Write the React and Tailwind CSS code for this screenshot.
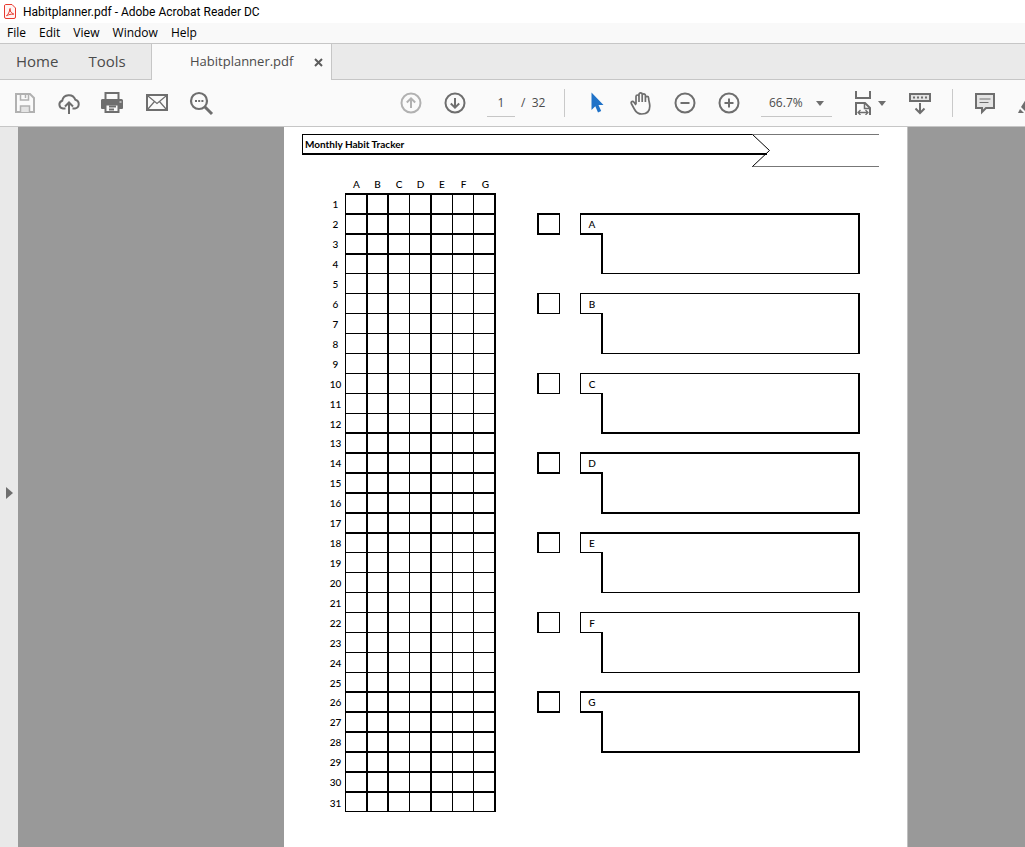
import React from "react";

const columns = [
  { name: "A", width: 21, line: 1 },
  { name: "B", width: 21, line: 2 },
  { name: "C", width: 22, line: 2 },
  { name: "D", width: 21, line: 1 },
  { name: "E", width: 22, line: 2 },
  { name: "F", width: 21, line: 1 },
  { name: "G", width: 23, line: 1 },
];

const days = Array.from({ length: 31 }, (_, i) => i + 1);
const thinDay = (d) => (d >= 5 && d <= 12) || (d >= 19 && d <= 25);
const rowHeight = (d) => {
  if (d === 12 || d === 25) return "h-[19px]";
  return d === 31 ? "h-[21px]" : "h-[20px]";
};

const habits = [
  { name: "A", slot: "h-[80px]", top: "border-t-2", tab: "h-[22px] border-b-2", box: "h-[61px]", bottom: "border-b" },
  { name: "B", slot: "h-[80px]", top: "border-t", tab: "h-[21px] border-b", box: "h-[61px]", bottom: "border-b" },
  { name: "C", slot: "h-[79px]", top: "border-t", tab: "h-[21px] border-b", box: "h-[61px]", bottom: "border-b-2" },
  { name: "D", slot: "h-[80px]", top: "border-t-2", tab: "h-[22px] border-b-2", box: "h-[62px]", bottom: "border-b-2" },
  { name: "E", slot: "h-[80px]", top: "border-t-2", tab: "h-[21px] border-b", box: "h-[61px]", bottom: "border-b" },
  { name: "F", slot: "h-[79px]", top: "border-t", tab: "h-[21px] border-b", box: "h-[61px]", bottom: "border-b" },
  { name: "G", slot: "h-[80px]", top: "border-t-2", tab: "h-[22px] border-b-2", box: "h-[62px]", bottom: "border-b-2" },
];

function ToolButton({ label, children, className = "text-[#6e6e6e]" }) {
  return (
    <button type="button" aria-label={label} className={`shrink-0 ${className}`}>
      <svg width="22" height="24" viewBox="0 0 22 24" fill="none" stroke="currentColor" strokeWidth="2" className="block overflow-visible">
        {children}
      </svg>
    </button>
  );
}

function Caret() {
  return (
    <svg width="8" height="5" viewBox="0 0 8 5" className="block" fill="#6e6e6e">
      <path d="M0 0h8L4 5z" />
    </svg>
  );
}

function Separator() {
  return <div className="h-[28px] w-px shrink-0 bg-[#c9c9c9]" />;
}

function TitleBar() {
  return (
    <header className="flex h-[23px] items-center gap-[7px] bg-white pl-[4px] font-['Roboto',sans-serif] text-[12px] text-black">
      <svg width="12" height="15" viewBox="0 0 12 15" fill="none" stroke="#e8392f">
        <path d="M1.500.5h6.500l3.500 3.500v9a1.500 1.500 0 0 1-1.500 1.500h-8a1.500 1.500 0 0 1-1.500-1.500v-11a1.500 1.500 0 0 1 1-1.500z" fill="#fff5f4" />
        <path d="M2.500 11.500c1.500-.5 3.200-4 3.300-6.500.1-1 .8-.6.500.5-.5 2 1.500 4 3 4.200.9.100.6.800-.4.600-2-.3-4 .2-5.400 1.200-.5.300-1.300.4-1 0z" />
      </svg>
      <span>Habitplanner.pdf - Adobe Acrobat Reader DC</span>
    </header>
  );
}

function MenuBar() {
  return (
    <nav className="flex h-[20px] items-center gap-[13px] bg-[#f9f9f9] pl-[7px] text-[12px] text-black">
      {["File", "Edit", "View", "Window", "Help"].map((m) => (
        <button key={m} type="button">{m}</button>
      ))}
    </nav>
  );
}

function TabBar() {
  return (
    <div className="flex h-[37px] border-t border-[#c6c6c6] bg-[#eaeaea] text-[#4b4b4b]">
      <div className="flex w-[152px] shrink-0 items-center gap-[30px] border-r border-b border-[#c6c6c6] pl-[16px] text-[15px]">
        <button type="button">Home</button>
        <button type="button">Tools</button>
      </div>
      <div className="flex w-[179px] shrink-0 items-center justify-between bg-[#fafafa] pr-[8px] pl-[38px]">
        <button type="button" className="text-[13px]">Habitplanner.pdf</button>
        <button type="button" aria-label="Close tab">
          <svg width="9" height="9" viewBox="0 0 9 9" className="block" stroke="#5c5c5c" strokeWidth="2">
            <path d="M1 1l7 7M8 1l-7 7" />
          </svg>
        </button>
      </div>
      <div className="flex-1 border-b border-l border-[#c6c6c6]" />
    </div>
  );
}

function Toolbar() {
  return (
    <div className="flex h-[47px] items-center overflow-hidden border-b border-[#c6c6c6] bg-[#fafafa] pl-[14px]">
      <div className="flex gap-[22px]">
        <ToolButton label="Save" className="text-[#b1b1b1]">
          <path d="M2 3h14l4 4v14H2z" />
          <path d="M6.500 3v6h8V3" strokeWidth="1.500" />
          <path d="M11.500 4v3" strokeWidth="1.500" />
          <path d="M6.500 21v-6h9v6" fill="#e4e4e4" strokeWidth="1.500" />
        </ToolButton>
        <ToolButton label="Upload to cloud">
          <path d="M7.500 17.500H5A4 4 0 0 1 4.200 9.700 6.800 6.800 0 0 1 17.300 8.700 4.500 4.500 0 0 1 17 17.500h-2.500" />
          <path d="M11 23V11.500M7 15.500l4-4 4 4" />
        </ToolButton>
        <ToolButton label="Print">
          <path d="M3.500 9V2h13v7" />
          <path d="M1 8h18.500a1.500 1.500 0 0 1 1.500 1.500V17a1 1 0 0 1-1 1H0a1 1 0 0 1-1-1V9.500A1.500 1.500 0 0 1 1 8z" fill="currentColor" stroke="none" />
          <path d="M3.500 13.500h13V21h-13z" fill="#fafafa" />
          <path d="M7 15.500h7M7 18.500h5" />
          <path d="M17.500 11h2" stroke="#fafafa" strokeWidth="1" />
        </ToolButton>
        <ToolButton label="Send by email">
          <path d="M1 4h20v15H1z" />
          <path d="M2 5l9 7.500L20 5M2 18l6.500-7.500M20 18l-6.500-7.500" strokeWidth="1.200" />
        </ToolButton>
        <ToolButton label="Find text">
          <circle cx="9" cy="10" r="8" strokeWidth="2.200" />
          <path d="M14.500 15.500l7.500 7.500" strokeWidth="3" />
          <path d="M5 10h2M8.200 10h2M11.400 10h2" />
        </ToolButton>
      </div>

      <div className="ml-[188px] flex shrink-0 items-center gap-[22px]">
        <ToolButton label="Previous page" className="text-[#b1b1b1]">
          <circle cx="11" cy="12" r="9.500" />
          <path d="M11 17V7.500M6.800 11.500L11 7.300l4.200 4.200" />
        </ToolButton>
        <ToolButton label="Next page">
          <circle cx="11" cy="12" r="9.500" />
          <path d="M11 7v9.500M6.800 12.500l4.200 4.200 4.200-4.200" />
        </ToolButton>
      </div>
      <input aria-label="Page number" defaultValue="1" className="ml-[21px] h-[28px] w-[28px] shrink-0 border-b border-[#c6c6c6] bg-transparent text-center text-[12px] text-[#4b4b4b] outline-none" />
      <span className="ml-[6px] w-[43px] shrink-0 text-[12px] whitespace-pre text-[#4b4b4b]">/  32</span>
      <Separator />

      <div className="ml-[21px] flex shrink-0 gap-[22px]">
        <ToolButton label="Select" className="text-[#1f72c8]">
          <path d="M5.500 1.500v17.500l3.800-3.700 2.700 6.200 3.200-1.500-2.700-6h5z" fill="currentColor" stroke="none" />
        </ToolButton>
        <ToolButton label="Pan">
          <path d="M6 13V5.500a1.500 1.500 0 0 1 3 0V11M9 5.500v-2a1.600 1.600 0 0 1 3.200 0V11M12.200 4.500a1.600 1.600 0 0 1 3.200 0V11M15.400 7a1.600 1.600 0 0 1 3.200 0c0 3 1.200 5 1.200 8 0 5-2.500 8-8 8-4.500 0-6-2-7.500-5L1.300 12.500c-.8-1.800 1.500-2.800 2.700-1.200L6 14" strokeWidth="1.700" />
        </ToolButton>
        <ToolButton label="Zoom out">
          <circle cx="11" cy="12" r="9.500" />
          <path d="M6.500 12h9" />
        </ToolButton>
        <ToolButton label="Zoom in">
          <circle cx="11" cy="12" r="9.500" />
          <path d="M6.500 12h9M11 7.500v9" />
        </ToolButton>
      </div>

      <div className="relative ml-[21px] shrink-0">
        <select aria-label="Zoom level" defaultValue="66.7%" className="block h-[28px] w-[71px] appearance-none border-b border-[#c6c6c6] bg-transparent pl-[8px] text-[12px] text-[#4b4b4b] outline-none">
          <option>66.7%</option>
          <option>100%</option>
        </select>
        <span className="pointer-events-none absolute top-[12px] right-[8px]">
          <Caret />
        </span>
      </div>

      <button type="button" aria-label="Fit width" className="ml-[22px] flex shrink-0 items-center gap-[6px]">
        <svg width="18" height="24" viewBox="0 0 18 24" fill="none" stroke="#6e6e6e" strokeWidth="2" className="block">
          <path d="M2 0v7h14V0" />
          <path d="M2 24V12h9l5 5v7" />
          <path d="M10.500 12v5.500H16" strokeWidth="1.500" />
          <path d="M4 21.500h10M6.500 19L4 21.500 6.500 24M11.500 19l2.500 2.500-2.500 2.500" strokeWidth="1.300" />
        </svg>
        <Caret />
      </button>

      <div className="ml-[23px] flex shrink-0">
        <ToolButton label="Page display">
          <path d="M1 3h20v7H1z" fill="#e4e4e4" />
          <path d="M4 6.500h14" strokeDasharray="2 2" />
          <path d="M11 12v10M6.500 17.500L11 22l4.500-4.500" />
        </ToolButton>
      </div>
      <div className="ml-[21px] shrink-0">
        <Separator />
      </div>
      <div className="ml-[22px] flex shrink-0 gap-[21px]">
        <ToolButton label="Add comment">
          <path d="M1 3h18v14H11l-4 4v-4H1z" fill="#e4e4e4" />
          <path d="M4.500 8h11M4.500 11.500h9" strokeWidth="1.200" />
        </ToolButton>
        <ToolButton label="Highlight">
          <path d="M0 22l2-4 4 4zM3 16l7-11 5 4-8 11z" fill="currentColor" stroke="none" />
        </ToolButton>
      </div>
    </div>
  );
}

function HabitTable() {
  return (
    <table aria-label="Habit days" className="table-fixed border-separate border-spacing-0 text-center text-[10px] leading-[12px]">
      <colgroup>
        <col style={{ width: 21 }} />
        {columns.map((c) => (
          <col key={c.name} style={{ width: c.width }} />
        ))}
      </colgroup>
      <thead>
        <tr className="h-[18px]">
          <td className="p-0" />
          {columns.map((c) => (
            <th key={c.name} scope="col" className="p-0 pl-[2px] font-medium">{c.name}</th>
          ))}
        </tr>
      </thead>
      <tbody>
        {days.map((d) => (
          <tr key={d} className={rowHeight(d)}>
            <th scope="row" className="p-0 pt-[2px] pl-[2px] font-medium">{d}</th>
            {columns.map((c) => (
              <td
                key={c.name}
                className={[
                  "border-black p-0",
                  thinDay(d) ? "border-t" : "border-t-2",
                  c.line === 2 ? "border-l-2" : "border-l",
                  c.name === "G" ? "border-r-2" : "",
                  d === 31 ? "border-b" : "",
                ].join(" ")}
              />
            ))}
          </tr>
        ))}
      </tbody>
    </table>
  );
}

function HabitCard({ habit }) {
  return (
    <li className={`flex items-start gap-[20px] ${habit.slot}`}>
      <input
        type="checkbox"
        aria-label={`Habit ${habit.name}`}
        className={`w-[23px] shrink-0 appearance-none border-r border-l-2 border-black ${habit.top} ${habit.tab}`}
      />
      <div className="flex min-w-0 flex-1 items-start">
        <div className={`flex w-[21px] shrink-0 items-center justify-center border-l border-black text-[10px] leading-[12px] font-medium ${habit.top} ${habit.tab}`}>
          <span className="pl-[2px]">{habit.name}</span>
        </div>
        <div className={`flex flex-1 flex-col border-r-2 border-black ${habit.top} ${habit.box}`}>
          <div className={habit.top === "border-t" ? "h-[19px]" : "h-[18px]"} />
          <div className={`flex-1 border-l-2 border-black ${habit.bottom}`} />
        </div>
      </div>
    </li>
  );
}

function Document() {
  return (
    <article className="flex-1 border-r border-[#c0c0c0] bg-white pt-[6px] pl-[18px] font-['Lato',sans-serif] text-black">
      <div className="mr-[28px] flex items-start">
        <div className="mt-px flex h-[21px] flex-1 items-center border-t border-b-2 border-l border-black pl-[2px]">
          <h1 className="text-[10px] leading-[12px] font-bold">Monthly Habit Tracker</h1>
        </div>
        <svg width="127" height="35" viewBox="0 0 127 35" fill="none" className="block shrink-0">
          <path d="M0 21h15" stroke="#000" strokeWidth="2" />
          <path d="M0 1.500h127" stroke="#777" />
          <path d="M0 33.500h127" stroke="#777" />
          <path d="M0.500 1.500L17.500 17.500 0.500 33.500" stroke="#000" />
        </svg>
      </div>
      <div className="mt-[7px] flex items-start pr-[47px] pl-[22px]">
        <HabitTable />
        <ul className="ml-[41px] min-w-0 flex-1 pt-[38px]">
          {habits.map((h) => (
            <HabitCard key={h.name} habit={h} />
          ))}
        </ul>
      </div>
    </article>
  );
}

export default function App() {
  return (
    <div className="flex h-screen flex-col overflow-hidden font-['Open_Sans','Noto_Sans',sans-serif]">
      <TitleBar />
      <MenuBar />
      <TabBar />
      <Toolbar />
      <div className="flex min-h-0 flex-1">
        <aside className="flex w-[18px] shrink-0 items-center bg-[#e9e9e9] pt-[12px] pl-[6px]">
          <button type="button" aria-label="Show navigation pane">
            <svg width="7" height="12" viewBox="0 0 7 12" className="block" fill="#6e6e6e">
              <path d="M0 0l7 6-7 6z" />
            </svg>
          </button>
        </aside>
        <main className="flex min-w-0 flex-1 overflow-hidden bg-[#999999] pr-[117px] pl-[266px]">
          <Document />
        </main>
      </div>
    </div>
  );
}
